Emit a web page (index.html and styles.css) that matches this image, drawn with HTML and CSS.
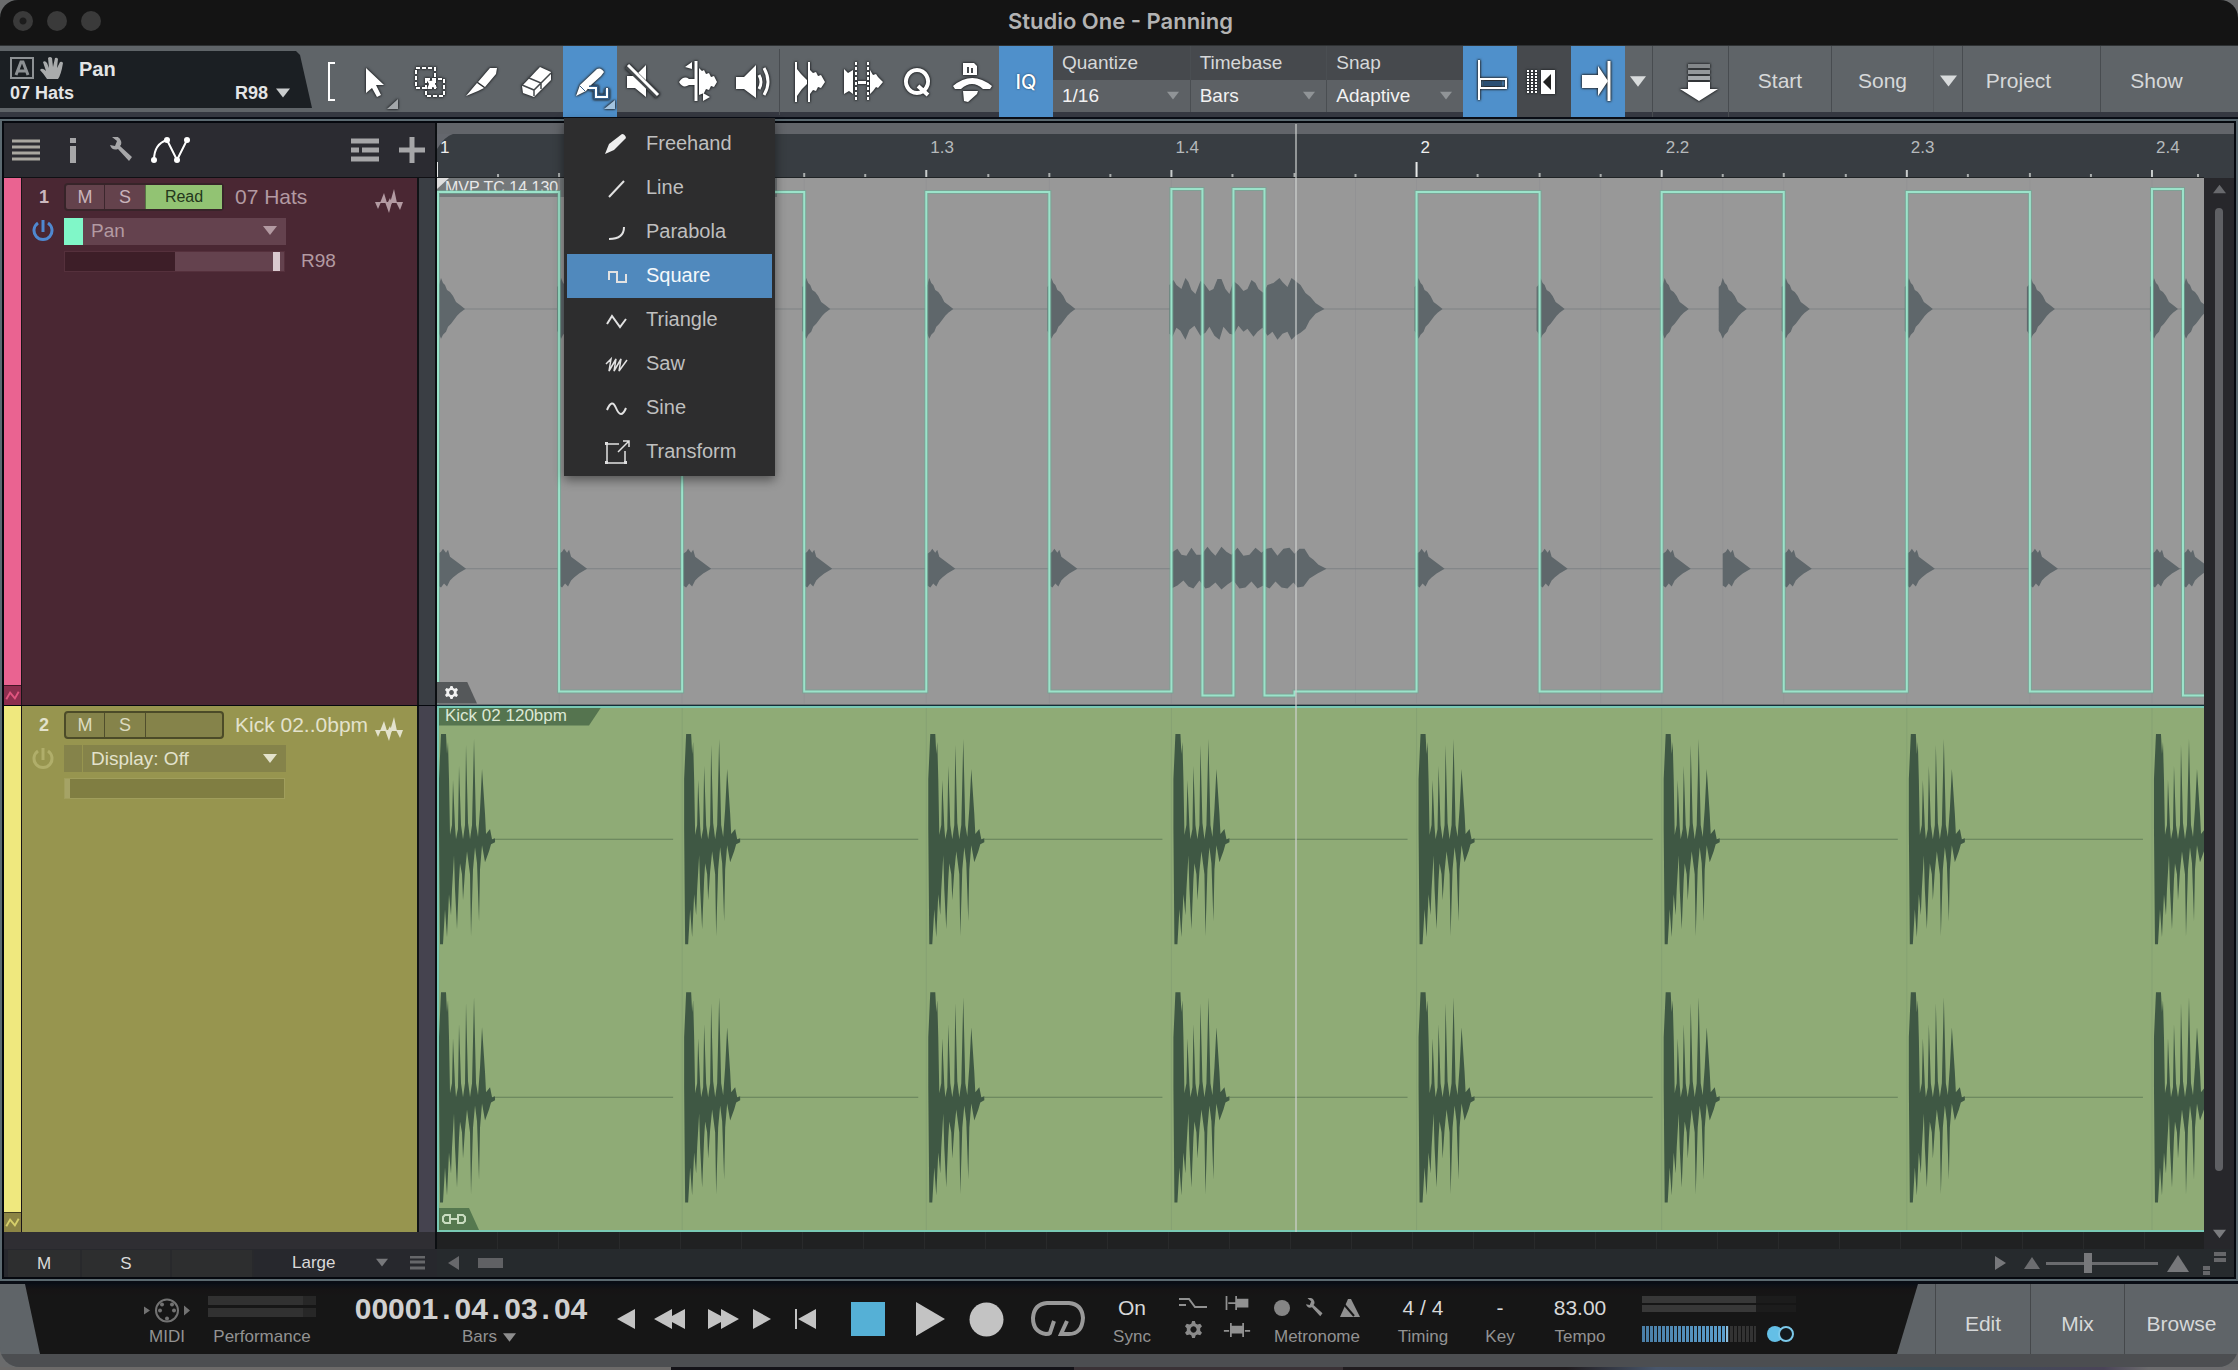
FILE: index.html
```html
<!DOCTYPE html>
<html lang="en">
<head>
<meta charset="utf-8">
<title>Studio One - Panning</title>
<link rel="stylesheet" href="styles.css">
</head>
<body>
<svg class="defs" width="0" height="0" aria-hidden="true">
  <defs>
    <path id="hat-l" d="M0-22L2-24 4-31 6-26 8-24 10-19 13-17 16-13 19-7 23-4 28 0 23 4 20 7 17 11 14 15 11 18 9 23 6 26 4 30 2 25 0 22Z"/>
    <path id="hat-r" d="M0-15L3-17 5-20 8-16 10-19 12-12 16-9 20-6 28 0 20 5 15 9 12 12 9 18 6 15 3 19 0 17Z"/>
    <path id="roll-l" d="M0-24L4-29 7-24 12-20 16-31 19-27 22-19 26-15 31-28 35-25 40-18 44-20 48-30 52-30 56-20 60-15 64-28 69-24 74-18 78-20 82-29 86-26 89-20 94-16 98-24 104-26 110-31 113-27 118-22 122-31 126-28 131-24 136-16 141-12 146-6 155 0 146 5 140 12 136 20 131 24 126 27 122 31 118 23 113 25 108 31 103 23 98 27 93 19 88 23 84 28 78 20 74 23 69 17 64 26 60 25 54 18 50 31 45 27 40 18 36 24 31 27 25 17 20 21 16 31 11 22 7 19 3 28 0 25Z"/>
    <path id="roll-r" d="M0-16L6-20 10-14 15-13 20-21 25-14 30-14 36-22 40-17 44-13 50-22 55-17 60-14 66-21 72-13 78-14 84-21 90-16 95-20 100-21 106-13 112-20 118-21 123-15 128-20 133-20 138-12 142-9 147-4 155 0 146 5 138 10 132 18 126 19 122 14 116 20 110 19 104 13 98 20 92 17 86 20 80 13 74 19 68 20 62 12 56 16 50 21 44 14 38 19 34 20 28 12 22 20 17 18 12 12 6 17 0 20Z"/>
    <path id="kick" d="M2-10V-60L4-105H9L10-85 11-97 12-60 13-4 15-14 16-59 18-12 19 0 21-10 22-73 24-14 26 0 28-14 29-94 31-16 33 0 35-14 37-100 39-14 41-2 43-30 45-70 48-25 49-5 53-10 55 0 58-1V3L54 5 52 12 48 23 45 6 43 30 42 82 40 24 38 8 36 30 34 97 33 35 30 12 28 32 26 61 25 35 23 24 22 40 20 90 18 50 17 16 15 50 14 76 12 55 10 98 8 70 6 105H3Z"/>
    <path id="tri-down" d="M0 0H14L7 9Z"/>
    <g id="audio" fill="currentColor"><path d="M0 13H6L3 20ZM5 14L9 4 12 14ZM10 13H17L14 24ZM15 14L19 0 22 14ZM21 13H28L25 21ZM12 15L15 9 17 15Z"/></g>
    <g id="wrench"><path d="M2 0Q9-2 11 4Q12 7 10 9L22 20 19 24 8 12Q2 14 0 8L5 9 7 4Z"/></g>
    <path id="gear" d="M8 0h3l1 3 2 1 3-1 2 3-2 2v3l2 2-2 3-3-1-2 1-1 3H8l-1-3-2-1-3 1-2-3 2-2V8L0 6l2-3 3 1 2-1ZM9.500 6a3.500 3.500 0 1 0 .01 0Z" fill-rule="evenodd"/>
  </defs>
</svg>

<div class="window">
  <header class="titlebar">
    <div class="lights"><button class="light light-dot" aria-label="Close"></button><button class="light" aria-label="Minimise"></button><button class="light" aria-label="Zoom"></button></div>
    <h1>Studio One - Panning</h1>
  </header>

  <div class="toolbar">
    <section class="param-display">
      <div class="param-top">
        <svg width="54" height="24" viewBox="0 0 54 24"><rect x="1" y="1" width="22" height="20" fill="none" stroke="#8d9194" stroke-width="2"/><path d="M6 18L11 5H13L18 18M8 14H16" fill="none" stroke="#8d9194" stroke-width="3"/><path d="M37 22Q33 16 30 13Q32 10 36 14L33 5Q35 3 37 6L39 11 38 1Q40-1 42 1L43 10 45 1Q47 0 48 2L47 11 50 5Q52 4 53 6Q51 18 48 22Z" fill="#a9abac"/></svg>
        <strong class="param-name">Pan</strong>
      </div>
      <div class="param-bottom"><span>07 Hats</span><button class="value-button">R98 <svg width="14" height="10" viewBox="0 0 14 9"><use href="#tri-down" fill="#c9cccd"/></svg></button></div>
    </section>

    <div class="tools">
      <svg class="bracket" width="35" height="54" viewBox="0 0 35 54"><path d="M23 8H17V45H23" fill="none" stroke="#fff" stroke-width="2"/></svg>
      <button class="tool" aria-label="Arrow tool"><svg viewBox="0 0 54 54"><path d="M19 13L37 30H29L34 40 30 42 25 33 19 38Z"/><path d="M51 44V54H40Z" fill="#a3a7aa"/></svg></button>
      <button class="tool" aria-label="Range tool"><svg viewBox="0 0 54 54"><path d="M15 13H34V33H15ZM25 24H43V41H25Z" fill="none" stroke="#fff" stroke-width="2" stroke-dasharray="4 2"/><path d="M25 24L30 26 35 23 34 29 36 33 30 32 26 34 28 29Z"/></svg></button>
      <button class="tool" aria-label="Split tool"><svg viewBox="0 0 54 54"><path d="M11 41L22 28 29 33 23 36ZM23 27L35 13 42 13 41 19 30 32Z"/></svg></button>
      <button class="tool" aria-label="Eraser tool"><svg viewBox="0 0 54 54"><path d="M13 31L31 12 42 17V25L25 42 14 38Z"/><path d="M13 30L25 35 42 18M25 35V41M20 23L32 28V34" fill="none" stroke="#44484b" stroke-width="1.500"/></svg></button>
      <button class="tool active" aria-label="Paint tool" aria-expanded="true"><svg viewBox="0 0 54 54"><path d="M13 41L17 30 34 14Q38 12 41 17L38 21 28 30 23 36Z"/><path d="M17 31L22 36" stroke="#35618d"/><path d="M26 33H33V42H44V34" fill="none" stroke="#35618d" stroke-width="5"/><path d="M25 33H33V42H44V33" fill="none" stroke="#fff" stroke-width="2"/><path d="M52 45V54H41Z" fill="#a3c4e0"/></svg></button>
      <button class="tool" aria-label="Mute tool"><svg viewBox="0 0 54 54"><path d="M10 21H18L29 10V42L18 33H10Z"/><path d="M10 11L41 41" stroke="#45494c" stroke-width="6"/><path d="M11 10L41 40" stroke="#fff" stroke-width="3"/></svg></button>
      <button class="tool" aria-label="Bend tool"><svg viewBox="0 0 54 54"><path d="M25 6V46" stroke="#fff" stroke-width="3"/><path d="M8 27Q13 20 18 24H24V30H18Q12 34 8 27ZM28 13L31 16 33 15 35 19 38 18 40 22 43 21 46 27 43 32 40 31 38 35 35 34 33 38 28 40ZM14 12L21 7V14ZM32 38L39 42 32 46Z"/></svg></button>
      <button class="tool" aria-label="Listen tool"><svg viewBox="0 0 54 54"><path d="M11 22H19L31 10V43L19 34H11Z"/><path d="M34 20Q38 27 34 34M39 13Q47 27 39 40" fill="none" stroke="#fff" stroke-width="3"/></svg></button>
      <span class="tool-gap"></span>
      <button class="tool" aria-label="Bend markers"><svg viewBox="0 0 54 54"><path d="M13 7V47M26 7V47" stroke="#fff" stroke-width="2"/><path d="M14 14L18 19 24 25V29L19 34 14 41ZM27 15L30 18 33 17 35 21 38 20 42 27 38 33 35 32 33 36 30 35 27 39Z"/></svg></button>
      <button class="tool" aria-label="Transients"><svg viewBox="0 0 54 54"><path d="M19 7V47M31 7V47" stroke="#fff" stroke-width="2" stroke-dasharray="3 2"/><path d="M7 14L11 18 16 15V39L12 36 7 39ZM21 26H29V29H21ZM33 15L36 20 39 19 41 22 46 27 41 33 39 32 36 36 33 39Z"/></svg></button>
      <button class="tool" aria-label="Quantize"><svg viewBox="0 0 54 54"><path d="M26 15A11 11.500 0 1 0 26.010 15M27 31L37 40" fill="none" stroke="#fff" stroke-width="4"/></svg></button>
      <button class="tool" aria-label="Macro toolbar"><svg viewBox="0 0 54 54"><path d="M18 20V8H29L32 11V20ZM8 31Q27 15 47 31L45 34H38Q27 24 16 34H10ZM18 36H33L32 39 23 47 19 46Z"/><path d="M23 18V12M27 18V13" stroke="#45494c" stroke-width="2"/></svg></button>
      <button class="tool active iq">IQ</button>
    </div>

    <div class="params">
      <label class="param" for="quantize"><span>Quantize</span><span class="pick"><select id="quantize"><option>1/16</option></select><svg width="12" height="10" viewBox="0 0 14 10"><use href="#tri-down"/></svg></span></label>
      <label class="param" for="timebase"><span>Timebase</span><span class="pick"><select id="timebase"><option>Bars</option></select><svg width="12" height="10" viewBox="0 0 14 10"><use href="#tri-down"/></svg></span></label>
      <label class="param" for="snap"><span>Snap</span><span class="pick"><select id="snap"><option>Adaptive</option></select><svg width="12" height="10" viewBox="0 0 14 10"><use href="#tri-down"/></svg></span></label>
    </div>

    <div class="tools">
      <button class="tool active" aria-label="Snap to events"><svg viewBox="0 0 54 54"><path d="M16 5V45M17 24H43V33H17Z" fill="none" stroke="#fff" stroke-width="2"/><path d="M21 26H38V31H21Z" fill="#2b4f73"/></svg></button>
      <button class="tool dim" aria-label="Ripple edit"><svg viewBox="0 0 54 54"><path d="M11 15V38M15 15V38M19 15V38" stroke="#fff" stroke-width="2" stroke-dasharray="2 1"/><path d="M24 15H38V39H24Z"/><path d="M34 19V35L26 27Z" fill="#222"/></svg></button>
      <button class="tool active" aria-label="Autoscroll"><svg viewBox="0 0 54 54"><path d="M11 20H27V11L37 26 27 41V33H11Z"/><path d="M38 6V46" stroke="#fff" stroke-width="3"/></svg></button>
      <button class="more" aria-label="Autoscroll options"><svg width="16" height="13" viewBox="0 0 14 9"><use href="#tri-down" fill="#d8dbdc"/></svg></button>
      <button class="drop" aria-label="Follow"><svg viewBox="0 0 54 54"><path d="M16 27H38V34H46L27 46 8 34H16Z"/><path d="M16 21H38V25H16Z" fill="#a5a9ac"/><path d="M16 15H38V19H16Z" fill="#94989b"/><path d="M16 9H38V13H16Z" fill="#83878a"/></svg></button>
    </div>
    <nav class="pages">
      <button class="page page-start">Start</button>
      <button class="page page-song">Song</button>
      <button class="page-more" aria-label="Open songs"><svg width="17" height="12" viewBox="0 0 14 9"><use href="#tri-down" fill="#d8dbdc"/></svg></button>
      <button class="page page-project">Project</button>
      <button class="page page-show">Show</button>
    </nav>

    <ul class="paint-menu" role="menu">
      <li><button><svg viewBox="0 0 30 30"><path d="M4 24L8 14 21 4Q24 4 25 8L13 20Z" fill="#eee" stroke="none"/></svg>Freehand</button></li>
      <li><button><svg viewBox="0 0 30 30"><path d="M8 23L23 7"/></svg>Line</button></li>
      <li><button><svg viewBox="0 0 30 30"><path d="M8 21Q23 21 23 9"/></svg>Parabola</button></li>
      <li><button class="selected"><svg viewBox="0 0 30 30"><path d="M8 18V10H16V20H25V12"/></svg>Square</button></li>
      <li><button><svg viewBox="0 0 30 30"><path d="M6 18L11 10 19 21 25 13"/></svg>Triangle</button></li>
      <li><button><svg viewBox="0 0 30 30"><path d="M5 14L10 9 8 21 15 9 13 21 20 9 18 21 26 10" stroke-width="1.500"/></svg>Saw</button></li>
      <li><button><svg viewBox="0 0 30 30"><path d="M6 16Q11 4 15 14Q20 26 25 14"/></svg>Sine</button></li>
      <li><button><svg viewBox="0 0 30 30"><path d="M18 6H6V25H24V13M17 14L28 3M22 3H28V9" stroke-width="1.500"/><path d="M4 4h3v3H4ZM4 23h3v3H4ZM23 23h3v3H23Z" fill="#ddd" stroke="none"/></svg>Transform</button></li>
    </ul>
  </div>

  <main class="workspace">
    <div class="frame">
      <div class="list-tools">
        <button aria-label="Track list"><svg width="28" height="22" viewBox="0 0 28 22"><path d="M0 2H28M0 8H28M0 14H28M0 20H28" stroke="#a9a7a0" stroke-width="3"/></svg></button>
        <button class="t-info" aria-label="Inspector"><svg width="8" height="26" viewBox="0 0 8 26"><path d="M1 1H7V6H1ZM1 9H7V26H1Z" fill="#a6a6a8"/></svg></button>
        <button class="t-wrench" aria-label="Options"><svg width="26" height="26" viewBox="0 0 24 26"><use href="#wrench" fill="#a6a6a8"/></svg></button>
        <button class="t-auto" aria-label="Automation"><svg width="40" height="28" viewBox="0 0 40 28"><path d="M3 24Q3 8 16 4L26 24 36 4" fill="none" stroke="#fff" stroke-width="2"/><g fill="#fff"><circle cx="3" cy="24" r="3"/><circle cx="16" cy="4" r="3"/><circle cx="26" cy="24" r="3"/><circle cx="36" cy="4" r="3"/></g></svg></button>
        <button class="t-groups" aria-label="Track groups"><svg width="28" height="24" viewBox="0 0 28 24"><path d="M0 3H28M0 12H8M11 12H28M0 21H28" stroke="#a6a6a8" stroke-width="5"/></svg></button>
        <button class="t-add" aria-label="Add track"><svg width="26" height="26" viewBox="0 0 26 26"><path d="M0 13H26M13 0V26" stroke="#a6a6a8" stroke-width="5"/></svg></button>
      </div>

      <div class="ruler">
        <div class="ruler-labels"><b>1</b><span></span><span>1.3</span><span>1.4</span><b>2</b><span>2.2</span><span>2.3</span><span>2.4</span></div>
        <svg class="ruler-ticks" viewBox="0 0 1766 54" preserveAspectRatio="none">
          <path d="M0 11H16Q8 13 0 26Z" fill="#64676d"/>
          <path d="M0 54V39M979 54V39" stroke="#e6e8e8" stroke-width="2"/>
          <path d="M245 54V47M489 54V47M734 54V47M1224 54V47M1469 54V47M1714 54V47" stroke="#c8cccc" stroke-width="2"/>
          <path d="M61 54V51M122 54V50M184 54V51M306 54V51M367 54V50M428 54V51M551 54V51M612 54V50M673 54V51M795 54V51M857 54V50M918 54V51M1040 54V51M1102 54V50M1163 54V51M1285 54V51M1346 54V50M1408 54V51M1530 54V51M1592 54V50M1653 54V51M1760 54V51" stroke="#a9adad" stroke-width="2"/>
        </svg>
      </div>
      <div class="vscroll-head"></div>

      <div class="tracks">
        <section class="track track-hats">
          <div class="strip"><svg class="strip-tag" width="17" height="20" viewBox="0 0 17 20"><path d="M2 14L6 7 11 13 15 6" fill="none" stroke="currentColor" stroke-width="2"/></svg></div>
          <div class="track-body">
            <div class="track-row">
              <strong class="num">1</strong>
              <div class="msr"><button>M</button><button>S</button><button class="mode">Read</button></div>
              <span class="track-name">07 Hats</span>
              <svg class="audio-icon" width="28" height="24" viewBox="0 0 28 24"><use href="#audio"/></svg>
            </div>
            <div class="track-row">
              <button class="power" aria-label="Automation on"><svg width="22" height="24" viewBox="0 0 22 24"><path d="M6 4A9 9 0 1 0 16 4M11 1V13" fill="none" stroke="currentColor" stroke-width="3"/></svg></button>
              <span class="swatch"></span>
              <span class="lane-pick"><select aria-label="Automation parameter"><option>Pan</option></select><svg width="14" height="10" viewBox="0 0 14 10"><use href="#tri-down" fill="currentColor"/></svg></span>
            </div>
            <div class="track-row">
              <input class="pan" type="range" min="0" max="100" value="98" aria-label="Pan value">
              <output class="pan-value">R98</output>
            </div>
          </div>
          <div class="meter"></div>
        </section>
        <section class="track track-kick">
          <div class="strip"><svg class="strip-tag" width="17" height="20" viewBox="0 0 17 20"><path d="M2 14L6 7 11 13 15 6" fill="none" stroke="currentColor" stroke-width="2"/></svg></div>
          <div class="track-body">
            <div class="track-row">
              <strong class="num">2</strong>
              <div class="msr"><button>M</button><button>S</button><button class="mode" aria-label="Automation mode"></button></div>
              <span class="track-name">Kick 02..0bpm</span>
              <svg class="audio-icon" width="28" height="24" viewBox="0 0 28 24"><use href="#audio"/></svg>
            </div>
            <div class="track-row">
              <button class="power" aria-label="Automation off"><svg width="22" height="24" viewBox="0 0 22 24"><path d="M6 4A9 9 0 1 0 16 4M11 1V13" fill="none" stroke="currentColor" stroke-width="3"/></svg></button>
              <span class="swatch"></span>
              <span class="lane-pick"><select aria-label="Automation display"><option>Display: Off</option></select><svg width="14" height="10" viewBox="0 0 14 10"><use href="#tri-down" fill="currentColor"/></svg></span>
            </div>
            <div class="track-row">
              <input class="pan" type="range" min="0" max="100" value="0" aria-label="Kick value">
            </div>
          </div>
          <div class="meter"></div>
        </section>
      </div>

      <div class="lanes">
        <div class="lane lane-hats">
          <div class="clip-name">MVP TC 14 130</div>
          <svg class="wave" viewBox="0 0 1766 526" preserveAspectRatio="none">
            <path d="M122 0V526M245 0V526M367 0V526M489 0V526M612 0V526M734 0V526M857 0V526M918 0V526M979 0V526M1102 0V526M1163 0V526M1224 0V526M1285 0V526M1346 0V526M1469 0V526M1592 0V526M1714 0V526" stroke="#939395" stroke-width="1"/>
            <path d="M0 131H1766M0 391H1766" stroke="#7e8184" stroke-width="1"/>
            <g fill="#5f676b">
              <use href="#hat-l" x="0" y="131"/><use href="#hat-l" x="120" y="131"/><use href="#hat-l" x="244" y="131"/><use href="#hat-l" x="365" y="131"/><use href="#hat-l" x="488" y="131"/><use href="#hat-l" x="610" y="131"/><use href="#roll-l" x="732" y="131"/><use href="#hat-l" x="977" y="131"/><use href="#hat-l" x="1099" y="131"/><use href="#hat-l" x="1223" y="131"/><use href="#hat-l" x="1281" y="131"/><use href="#hat-l" x="1344" y="131"/><use href="#hat-l" x="1467" y="131"/><use href="#hat-l" x="1589" y="131"/><use href="#hat-l" x="1712" y="131"/><use href="#hat-l" x="1744" y="131"/>
              <use href="#hat-r" x="1" y="391"/><use href="#hat-r" x="122" y="391"/><use href="#hat-r" x="246" y="391"/><use href="#hat-r" x="367" y="391"/><use href="#hat-r" x="490" y="391"/><use href="#hat-r" x="612" y="391"/><use href="#roll-r" x="734" y="391"/><use href="#hat-r" x="979" y="391"/><use href="#hat-r" x="1102" y="391"/><use href="#hat-r" x="1225" y="391"/><use href="#hat-r" x="1285" y="391"/><use href="#hat-r" x="1346" y="391"/><use href="#hat-r" x="1469" y="391"/><use href="#hat-r" x="1592" y="391"/><use href="#hat-r" x="1714" y="391"/><use href="#hat-r" x="1745" y="391"/>
            </g>
            <path class="auto-glow" d="M1 526V14H122V514H245V14H367V514H489V14H612V514H734V11H765V518H796V11H827V518H857V514H979V14H1102V514H1224V14H1346V514H1469V14H1592V514H1714V11H1745V518H1766"/>
            <path class="auto-line" d="M1 526V14H122V514H245V14H367V514H489V14H612V514H734V11H765V518H796V11H827V518H857V514H979V14H1102V514H1224V14H1346V514H1469V14H1592V514H1714V11H1745V518H1766"/>
            <path d="M0 0H12L0 11Z" fill="#dedede"/>
          </svg>
          <div class="lane-tag"><svg width="13" height="13" viewBox="0 0 19 19"><use href="#gear" fill="#f2f2f2"/></svg></div>
        </div>
        <div class="lane lane-kick">
          <svg class="wave" viewBox="0 0 1766 526" preserveAspectRatio="none">
            <path d="M245 0V526M489 0V526M734 0V526M979 0V526M1224 0V526M1469 0V526M1714 0V526" stroke="#86a273" stroke-width="1"/>
            <path d="M58 133H236M303 133H481M547 133H725M792 133H970M1037 133H1215M1282 133H1460M1527 133H1705M58 391H236M303 391H481M547 391H725M792 391H970M1037 391H1215M1282 391H1460M1527 391H1705" stroke="#64805a" stroke-width="1"/>
            <g fill="#3f5844">
              <use href="#kick" x="0" y="133"/><use href="#kick" x="245" y="133"/><use href="#kick" x="489" y="133"/><use href="#kick" x="734" y="133"/><use href="#kick" x="979" y="133"/><use href="#kick" x="1224" y="133"/><use href="#kick" x="1469" y="133"/><use href="#kick" x="1714" y="133"/>
              <use href="#kick" x="0" y="391"/><use href="#kick" x="245" y="391"/><use href="#kick" x="489" y="391"/><use href="#kick" x="734" y="391"/><use href="#kick" x="979" y="391"/><use href="#kick" x="1224" y="391"/><use href="#kick" x="1469" y="391"/><use href="#kick" x="1714" y="391"/>
            </g>
          </svg>
          <div class="clip-name">Kick 02 120bpm</div>
          <div class="lane-tag"><svg width="24" height="10" viewBox="0 0 24 10"><path d="M3 1H8V9H3L1 7V3ZM16 1H21L23 3V7L21 9H16ZM7 5H17" fill="none" stroke="#c9dcc0" stroke-width="2"/></svg></div>
        </div>
        <div class="playhead"></div>
      </div>

      <div class="vscroll">
        <svg width="13" height="10" viewBox="0 0 14 9"><path d="M0 9H14L7 0Z" fill="#68696d"/></svg>
        <div class="vthumb"></div>
        <svg width="13" height="10" viewBox="0 0 14 9"><use href="#tri-down" fill="#7a7b7e"/></svg>
      </div>

      <div class="below-list"></div>
      <div class="below-lanes"></div>
      <div class="below-scroll"></div>

      <div class="list-footer">
        <button class="f-mute">M</button><button class="f-solo">S</button><button class="f-mode" aria-label="Automation"></button>
        <select aria-label="Track height"><option>Large</option></select>
        <svg class="f-tri" width="12" height="10" viewBox="0 0 14 10"><use href="#tri-down" fill="#77787b"/></svg>
        <svg class="f-lines" width="15" height="15" viewBox="0 0 15 15"><path d="M0 1H15M0 6H15M0 12H15" stroke="#66676a" stroke-width="3"/></svg>
      </div>
      <div class="lane-footer">
        <button class="f-left" aria-label="Scroll left"><svg width="11" height="14" viewBox="0 0 11 14"><path d="M11 0V14L0 7Z" fill="#67686b"/></svg></button>
        <div class="hthumb"></div>
        <button class="f-right" aria-label="Scroll right"><svg width="11" height="14" viewBox="0 0 11 14"><path d="M0 0V14L11 7Z" fill="#77787b"/></svg></button>
        <svg class="z-small" width="16" height="12" viewBox="0 0 16 12"><path d="M8 0L16 12H0Z" fill="#6c6d70"/></svg>
        <input class="zoom" type="range" min="0" max="100" value="37" aria-label="Zoom">
        <svg class="z-big" width="22" height="17" viewBox="0 0 22 17"><path d="M11 0L22 17H0Z" fill="#77787b"/></svg>
        <svg class="z-levels" width="24" height="24" viewBox="0 0 24 24"><path d="M12 3H24M12 9H24M1 17H8M1 22H8" stroke="#66676a" stroke-width="4"/></svg>
      </div>
    </div>
  </main>

  <footer class="transport">
    <div class="transport-panel">
      <div class="cell c-midi"><svg width="46" height="26" viewBox="0 0 46 26"><g fill="none" stroke="#727272" stroke-width="2"><circle cx="23" cy="13" r="11"/></g><g fill="#727272"><circle cx="16" cy="13" r="2"/><circle cx="30" cy="13" r="2"/><circle cx="18" cy="7" r="2"/><circle cx="28" cy="7" r="2"/><circle cx="23" cy="21" r="2"/><path d="M0 9L6 13 0 17ZM40 8L46 13 40 18Z"/></g></svg><small>MIDI</small></div>
      <div class="cell c-perf"><div class="perf"><i></i><i></i></div><small>Performance</small></div>
      <div class="cell c-time"><strong class="clock">00001<i>.</i>04<i>.</i>03<i>.</i>04</strong><button class="bars">Bars <svg width="13" height="9" viewBox="0 0 14 9"><use href="#tri-down" fill="#8d8d8d"/></svg></button></div>
      <div class="keys">
        <button class="k-back" aria-label="Back"><svg width="18" height="20" viewBox="0 0 18 20"><path d="M18 0V20L0 10Z"/></svg></button>
        <button class="k-rew" aria-label="Rewind"><svg width="31" height="20" viewBox="0 0 31 20"><path d="M18 0V7L31 0V20L18 13V20L0 10Z"/></svg></button>
        <button class="k-ff" aria-label="Forward"><svg width="31" height="20" viewBox="0 0 31 20"><path d="M0 0L13 7V0L31 10 13 20V13L0 20Z"/></svg></button>
        <button class="k-next" aria-label="Next"><svg width="18" height="20" viewBox="0 0 18 20"><path d="M0 0V20L18 10Z"/></svg></button>
        <button class="k-zero" aria-label="Return to zero"><svg width="21" height="20" viewBox="0 0 21 20"><path d="M0 0H2V20H0ZM21 0V20L3 10Z"/></svg></button>
        <button class="k-stop" aria-label="Stop"><svg width="34" height="34" viewBox="0 0 34 34"><path d="M0 0H34V34H0Z" fill="#55b0d6"/></svg></button>
        <button class="k-play" aria-label="Play"><svg width="29" height="34" viewBox="0 0 29 34"><path d="M0 0V34L29 17Z"/></svg></button>
        <button class="k-rec" aria-label="Record"><svg width="35" height="35" viewBox="0 0 35 35"><circle cx="17.500" cy="17.500" r="17"/></svg></button>
        <button class="k-loop" aria-label="Loop"><svg width="54" height="36" viewBox="0 0 54 36"><path d="M23 20L19 32Q18 33 15 33Q2 31 2 17Q3 3 16 2H38Q51 3 52 17Q51 33 38 33H30L36 20" fill="none" stroke="#999" stroke-width="4"/></svg></button>
      </div>
      <div class="cell c-sync"><span>On</span><small>Sync</small></div>
      <div class="sync-icons">
        <svg width="28" height="14" viewBox="0 0 28 14"><path d="M0 3H10L16 11H28M0 9H7" fill="none" stroke="#919191" stroke-width="2"/></svg>
        <svg width="24" height="14" viewBox="0 0 26 16"><path d="M1 0V16M12 0V16M3 8H12" stroke="#919191" stroke-width="2"/><path d="M13 3H26V13H13Z" fill="#919191"/></svg>
        <svg width="17" height="17" viewBox="0 0 19 19"><use href="#gear" fill="#8a8a8a"/></svg>
        <svg width="28" height="14" viewBox="0 0 30 16"><path d="M8 0V16M22 0V16M0 9H6M24 9H30" stroke="#919191" stroke-width="2"/><path d="M8 3H22V12H8Z" fill="#919191"/></svg>
      </div>
      <div class="cell c-metro"><div class="metro-icons"><svg width="16" height="16" viewBox="0 0 16 16"><circle cx="8" cy="8" r="8" fill="#858585"/></svg><svg width="18" height="20" viewBox="0 0 24 26"><use href="#wrench" fill="#919191"/></svg><svg width="20" height="18" viewBox="0 0 20 18"><path d="M8 0H11L20 18H0Z" fill="#919191"/><path d="M2 3L14 17" stroke="#161616" stroke-width="2"/></svg></div><small>Metronome</small></div>
      <div class="cell c-timing"><span>4 / 4</span><small>Timing</small></div>
      <div class="cell c-key"><span>-</span><small>Key</small></div>
      <div class="cell c-tempo"><span>83.00</span><small>Tempo</small></div>
      <div class="master">
        <div class="levels"><i></i><i></i></div>
        <div class="master-row"><div class="volume"></div><svg width="28" height="16" viewBox="0 0 28 16"><circle cx="8" cy="8" r="8" fill="#64bfe6"/><circle cx="19" cy="8" r="7" fill="#12181c" stroke="#7cc9ea" stroke-width="2"/></svg></div>
      </div>
    </div>
    <nav class="views"><button class="v-edit">Edit</button><button class="v-mix">Mix</button><button class="v-browse">Browse</button></nav>
  </footer>
</div>
<div class="desktop"></div>
</body>
</html>
```
FILE: styles.css
```css
* { box-sizing: border-box; }
html, body { height: 100%; }
body {
  margin: 0;
  display: flex;
  flex-direction: column;
  overflow: hidden;
  background: #6a6b6c;
  color: #d6d8d9;
  font: 21px/24px "Liberation Sans", Arial, sans-serif;
}
button, select, input { font: inherit; color: inherit; margin: 0; padding: 0; border: 0; background: none; border-radius: 0; }
select { appearance: none; outline: 0; }
svg { display: block; flex: none; }
.defs { position: absolute; }

.window {
  flex: 1;
  min-height: 0;
  display: flex;
  flex-direction: column;
  border-radius: 18px 18px 20px 20px;
  overflow: hidden;
  background: #5f6468;
}
.desktop { flex: none; height: 3px; background: linear-gradient(90deg, #6c6a69 0 30%, #141318 30% 48%, #3a3236 48% 60%, #201c1f 60% 70%, #48566b 74%, #3c4f59 86%, #4a4458 94%, #6c6c6e 96%); }

/* Title bar */
.titlebar { flex: none; display: grid; grid-template-columns: 1fr auto 1fr; align-items: center; height: 46px; padding: 0 10px 3px 13px; background: #141414; border-bottom: 1px solid #2e3133; }
.titlebar h1 { margin: 0; font: 600 22px/24px Inter, sans-serif; color: #b3b3b3; }
.lights { display: flex; gap: 14px; }
.light { width: 20px; height: 20px; border-radius: 50%; background: #3a3a3a; }
.light-dot { background: radial-gradient(circle, #1c1c1c 0 3px, #3a3a3a 4px); }

/* Toolbar */
.toolbar { position: relative; flex: none; display: flex; height: 71px; background: linear-gradient(#5f6468 0 66px, #353841 66px); }
.param-display { flex: none; width: 312px; height: 57px; margin-top: 5px; padding: 6px 22px 0 10px; background: #1b1f23; clip-path: polygon(0 0, 296px 0, 300px 4px, 100% 100%, 0 100%); font-weight: bold; font-size: 18px; color: #e4e5e6; }
.param-top { display: flex; align-items: center; gap: 15px; font-size: 20px; }
.param-bottom { display: flex; justify-content: space-between; }
.value-button { display: flex; align-items: center; gap: 8px; font-weight: bold; }
.tools { display: flex; flex: none; align-items: center; }
.tool, .drop { width: 54px; height: 71px; display: flex; align-items: center; justify-content: center; }
.drop { width: 77px; padding-left: 17px; border-left: 1px solid #484c50; border-right: 1px solid #484c50; }
.tool svg, .drop svg { width: 54px; height: 54px; fill: #fff; filter: drop-shadow(0 0 1px #26292c) drop-shadow(0 0 1px #26292c); }
.tool.active { background: #4f90cb; }
.tool.dim { background: #46494d; }
.tool-gap { width: 4px; height: 66px; border-left: 1px solid #484c50; }
.iq { font: 500 20px/24px Inter, sans-serif; color: #fff; text-shadow: 0 0 2px #16324c; }
.more { width: 27px; height: 71px; display: flex; align-items: center; padding-left: 5px; }
.params { flex: none; display: flex; width: 410px; height: 66px; background: linear-gradient(#46494d 0 34px, #5d6165 34px); font-size: 19px; }
.param { display: flex; flex-direction: column; width: 137px; padding: 5px 11px 0 9px; }
.param + .param { border-left: 1px solid #4a4e52; }
.param > span:first-child { height: 33px; }
.pick { display: flex; align-items: center; color: #f2f2f2; }
.pick select { flex: 1; min-width: 0; }
.pick svg { fill: #909497; }
.pages { flex: 1; display: flex; min-width: 0; height: 66px; }
.page { padding-top: 4px; border-right: 1px solid #484c50; }
.page-start { flex: 1 1 103px; }
.page-song { flex: 1 1 102px; border-color: #575b5f; }
.page-more { flex: 1 1 29px; display: flex; align-items: center; justify-content: center; padding-top: 4px; border-right: 1px solid #484c50; }
.page-project { flex: 1 1 138px; padding-right: 26px; }
.page-show { flex: 1 1 137px; border: 0; padding-right: 26px; }

/* Paint tool menu */
.paint-menu { position: absolute; left: 564px; top: 72px; z-index: 5; width: 211px; margin: 0; padding: 4px 3px 2px; list-style: none; background: #2d2d2e; box-shadow: 0 4px 10px rgba(0, 0, 0, .45); font-size: 20px; color: #bfbfbf; }
.paint-menu button { display: flex; align-items: center; gap: 15px; width: 100%; height: 44px; padding: 0 0 2px 34px; }
.paint-menu .selected { background: #5089bd; color: #f4f8fb; }
.paint-menu svg { width: 30px; height: 30px; fill: none; stroke: #e2e2e2; stroke-width: 2; margin-top: 4px; }

/* Arrangement */
.workspace { flex: 1; min-height: 0; display: flex; padding: 2px 0 3px; background: #090d15; }
.frame { flex: 1; min-width: 0; display: grid; grid-template-columns: 433px 1fr 30px; grid-template-rows: 55px 1fr 17px 28px; padding: 2px; border: 2px solid #5b6970; background: #05080e; }

.list-tools { display: flex; align-items: center; padding: 0 10px 0 8px; background: #2b2b31; border-right: 2px solid #0c0f12; border-bottom: 1px solid #101014; }
.t-info { margin-left: 29px; }
.t-wrench { margin-left: 32px; }
.t-auto { margin-left: 16px; }
.t-groups { margin-left: auto; }
.t-add { margin-left: 20px; }

.ruler { position: relative; background: linear-gradient(#62656a 0 11px, #383d42 11px); overflow: hidden; border-bottom: 1px solid #202426; }
.ruler-ticks { position: absolute; inset: 0; width: 100%; height: 54px; }
.ruler-labels { position: relative; z-index: 1; display: grid; grid-template-columns: repeat(7, 245fr) 51fr; padding-top: 13px; font-size: 17px; color: #b5b9bb; }
.ruler-labels > * { padding-left: 3px; }
.ruler-labels b { font-weight: normal; color: #eee; }
.vscroll-head { background: #383d42; border-top: 11px solid #62656a; }

.tracks { display: grid; grid-template-rows: 1fr 1fr; gap: 1px; min-height: 0; }
.track { display: flex; min-height: 0; border-right: 2px solid #0c0f12; }
.strip { width: 18px; display: flex; align-items: flex-end; border-right: 1px solid #1a1418; }
.strip-tag { border-top: 1px solid rgba(0, 0, 0, .5); }
.track-body { flex: 1; padding-top: 4px; }
.meter { width: 18px; border-left: 2px solid #101316; background: #3a3e44; }
.track-row { display: flex; align-items: center; height: 30px; }
.track-row:first-child { margin-bottom: 4px; }
.num { width: 42px; padding-left: 17px; font-size: 18px; }
.msr { display: flex; width: 160px; height: 28px; border: 2px solid rgba(0, 0, 0, .45); border-radius: 4px; font-size: 18px; line-height: 24px; }
.msr button { width: 38px; }
.msr button + button { width: 41px; border-left: 1px solid rgba(0, 0, 0, .4); }
.msr .mode { flex: 1; font-size: 16px; }
.track-name { margin-left: 11px; width: 137px; white-space: nowrap; }
.audio-icon { margin: 8px 0 0 3px; }
.power { width: 22px; margin: 0 10px 0 10px; }
.swatch { width: 19px; height: 27px; }
.lane-pick { display: flex; align-items: center; width: 203px; height: 27px; padding: 0 9px 0 8px; font-size: 19px; }
.lane-pick select { flex: 1; min-width: 0; }
.pan { appearance: none; width: 221px; height: 21px; margin-left: 42px; border: 1px solid; }
.pan::-webkit-slider-thumb { appearance: none; width: 7px; height: 19px; background: #d9c9cf; }
.pan-value { margin-left: 16px; font-size: 19px; }

.track-hats .strip { background: #ea6391; color: #e0557f; }
.track-hats .strip-tag { background: #8c2e4e; }
.track-hats .track-body { background: #4a2733; color: #b39aa2; }
.track-hats .num { color: #ccb8be; }
.track-hats .msr { background: #64424c; color: #c9b3ba; }
.track-hats .mode { background: #92c373; color: #24381c; }
.track-hats .power { color: #4f88d0; }
.track-hats .swatch { background: #80f7c8; }
.track-hats .lane-pick { background: #64424e; }
.track-hats .pan { border-color: #55303c; background: linear-gradient(90deg, #3d1e28 50%, #64424e 50%); }
.track-kick .strip { background: #efe87e; color: #d6cf6a; }
.track-kick .strip-tag { background: #8b8444; }
.track-kick .track-body { background: #97954f; color: #e3e2cc; }
.track-kick .msr { background: #85834a; color: #dcdbc0; border-color: #4c4b28; }
.track-kick .power { color: #b0ae6a; }
.track-kick .swatch { background: #85834a; border-right: 1px solid #97954f; }
.track-kick .lane-pick { background: #85834a; }
.track-kick .pan { border-color: #a09e5c; background: #807e42; }
.track-kick .pan::-webkit-slider-thumb { background: #a5a366; width: 5px; }
.track-kick .meter { background: #45434f; }

.lanes { position: relative; display: grid; grid-template-rows: 1fr 1fr; gap: 1px; min-width: 0; min-height: 0; background: #12303a; }
.lane { position: relative; min-height: 0; overflow: hidden; }
.lane-hats { background: #989898; border-bottom: 1px solid #6c6f70; }
.lane-kick { background: #8fab76; border: 2px solid #79c9b4; border-right: 0; }
.wave { position: absolute; inset: 0; width: 100%; height: 100%; }
.lane-kick .wave { inset: -2px 0 auto -2px; width: calc(100% + 2px); height: calc(100% + 4px); }
.auto-glow { fill: none; stroke: #6aa892; stroke-width: 4; opacity: .6; }
.auto-line { fill: none; stroke: #9be3ca; stroke-width: 2; }
.clip-name { position: relative; width: 340px; height: 19px; padding-left: 8px; background: #74787a; font-size: 16px; line-height: 19px; color: #e8e8e8; }
.lane-hats .wave { z-index: 1; }
.lane-kick .clip-name { width: 162px; height: 18px; background: #55744f; clip-path: polygon(0 0, 100% 0, 150px 100%, 0 100%); font-size: 17px; line-height: 16px; padding-left: 6px; color: #dde9d5; }
.lane-tag { position: absolute; left: 0; bottom: 0; z-index: 1; display: flex; align-items: center; padding-left: 8px; width: 40px; height: 22px; background: #55585a; clip-path: polygon(0 0, 30px 0, 100% 100%, 0 100%); }
.lane-kick .lane-tag { padding-left: 3px; background: #55784f; }
.playhead { position: absolute; left: 48.580%; top: -54px; bottom: 0; width: 2px; background: rgba(206, 210, 208, .6); z-index: 2; }

.vscroll { display: flex; flex-direction: column; align-items: center; gap: 14px; padding: 6px 0 0; background: #27272b; margin-bottom: -7px; z-index: 1; }
.vthumb { flex: 1; width: 8px; margin-bottom: 44px; border-radius: 4px; background: #5f6064; }
.below-list { background: #2f2e33; border-right: 2px solid #0c0f12; }
.below-lanes { background: repeating-linear-gradient(90deg, #202122 0 60px, #292a2b 60px 61px); }
.below-scroll { background: #27272b; }

.list-footer { display: flex; align-items: center; padding-left: 4px; background: #27282d; font-size: 17px; color: #dadada; }
.list-footer button { height: 27px; padding-top: 2px; background: #2d2e2f; border-right: 2px solid #28292c; }
.f-mute { width: 74px; }
.f-solo { width: 90px; }
.f-mode { width: 82px; }
.list-footer select { width: 76px; margin-left: 38px; }
.f-tri { margin-left: 8px; }
.f-lines { margin-left: 22px; }
.lane-footer { grid-column: 2 / 4; display: flex; align-items: center; padding: 0 8px 0 11px; background: #262a2d; }
.hthumb { width: 25px; height: 10px; margin-left: 19px; background: #606164; }
.f-right { margin-left: auto; }
.z-small { margin-left: 18px; }
.zoom { appearance: none; width: 112px; height: 20px; margin-left: 6px; background: linear-gradient(#6a6b6e, #6a6b6e) center / 100% 3px no-repeat; }
.zoom::-webkit-slider-thumb { appearance: none; width: 8px; height: 20px; background: #77787b; }
.z-big { margin-left: 9px; }
.z-levels { margin-left: 13px; }

/* Transport */
.transport { flex: none; display: flex; height: 83px; border-bottom: 13px solid #4c4e51; background: #5f6468; }
.transport-panel { flex: 1; min-width: 0; display: flex; align-items: flex-start; padding: 12px 0 0 144px; background: linear-gradient(#0c1018, #161415 6px, #161616 12px); clip-path: polygon(25px 0, 100% 0, calc(100% - 21px) 100%, 40px 100%); }
.cell { flex: none; display: flex; flex-direction: column; align-items: center; white-space: nowrap; }
.cell > :first-child { height: 29px; }
.cell small { font-size: 17px; color: #929292; }
.c-midi { width: 46px; }
.c-perf { width: 108px; margin-left: 18px; }
.perf { display: flex; flex-direction: column; gap: 3px; width: 100%; }
.perf i { height: 9px; background: linear-gradient(90deg, #313131 88%, #272727 88%); }
.c-time { width: 236px; margin-left: 37px; }
.clock { font-size: 30px; line-height: 26px; color: #d0d0d0; }
.clock i { font-style: normal; padding: 0 4px; }
.bars { display: flex; align-items: center; gap: 6px; font-size: 17px; color: #929292; padding-left: 36px; }
.keys { flex: none; display: flex; align-items: center; height: 46px; fill: #c3c3c3; margin-left: 28px; }
.keys .k-rew { margin-left: 19px; }
.keys .k-ff { margin-left: 23px; }
.keys .k-next { margin-left: 14px; }
.keys .k-zero { margin-left: 24px; }
.keys .k-stop { margin-left: 35px; }
.keys .k-play { margin-left: 31px; }
.keys .k-rec { margin-left: 24px; }
.keys .k-loop { margin-left: 27px; }
.c-sync { width: 40px; margin-left: 27px; }
.sync-icons { flex: none; display: grid; grid-template-columns: 28px 30px; column-gap: 15px; row-gap: 11px; place-items: center; margin-left: 27px; }
.c-metro { width: 92px; margin-left: 19px; }
.metro-icons { display: flex; align-items: center; justify-content: space-between; width: 86px; padding-bottom: 5px; }
.c-timing { width: 60px; margin-left: 30px; }
.c-key { width: 40px; margin-left: 27px; }
.c-tempo { width: 70px; margin-left: 25px; }
.master { margin-left: 27px; }
.levels { display: flex; flex-direction: column; gap: 2px; width: 154px; height: 30px; }
.levels i { height: 7px; background: linear-gradient(90deg, #383838 114px, #1c1c1c 114px); }
.master-row { display: flex; align-items: center; gap: 11px; }
.volume { width: 114px; height: 16px; background: repeating-linear-gradient(90deg, transparent 0 3px, #141414 3px 4px), linear-gradient(90deg, #4a7ea6 0, #5b9fcd 83px, #8cc0e0 83px 86px, #333 86px); }
.views { flex: none; display: flex; width: 320px; padding-left: 17px; }
.views button { border-left: 1px solid #45484b; padding-top: 10px; }
.v-edit { width: 95px; }
.v-mix { width: 94px; }
.v-browse { flex: 1; }
```
